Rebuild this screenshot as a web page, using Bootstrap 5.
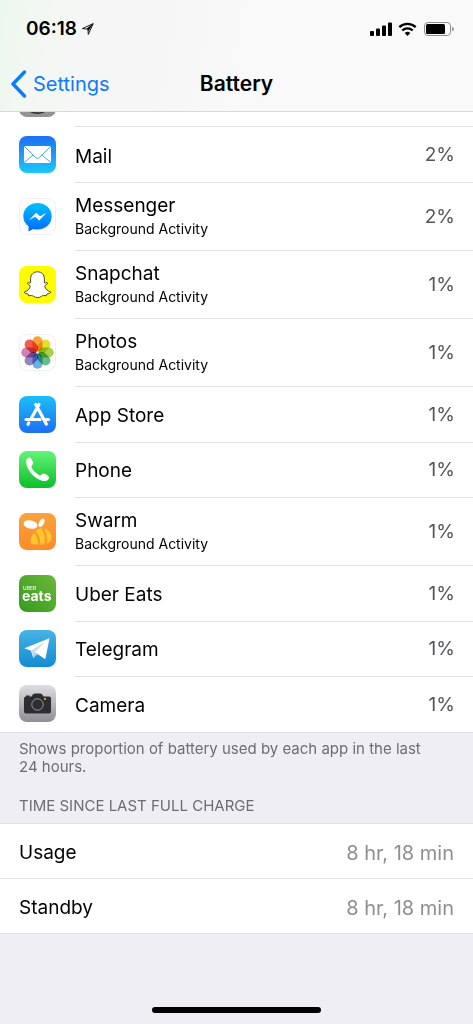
<!DOCTYPE html>
<html lang="en">
<head>
<meta charset="utf-8">
<meta name="viewport" content="width=device-width, initial-scale=1">
<title>Battery</title>
<link rel="stylesheet" href="https://cdn.jsdelivr.net/npm/bootstrap@5.3.0/dist/css/bootstrap.min.css">
<style>
  body { font-family: Inter, "Liberation Sans", sans-serif; font-size: 19px; line-height: 28px; color: #000; background: #efeef4; }
  .top-bar { height: 112px; background: linear-gradient(100deg, #ebf8ec 0, #f3f7f3 9%, #f6f6f6 20%, #f6f6f6 35%, #f9f9f9 55%); border-bottom: 1px solid #d9d9db; }
  .status-line { height: 56px; padding: 2px 18px 0 26px; }
  .clock { font-size: 19px; font-weight: 600; }
  .nav-line { height: 55px; display: grid; grid-template-columns: 1fr auto 1fr; padding: 0 10px; }
  .nav-line h1 { font-size: 21px; line-height: 28px; font-weight: 600; }
  .back-link { color: #0a7aff; font-size: 20px; gap: 6px; }
  .app-list { border-bottom: 1px solid #dddce3; }
  .app-item { height: 56px; padding-left: 19px; gap: 19px; }
  .app-single + .app-single { height: 55px; }
  .app-item.app-tall { height: 68px; }
  .app-item.app-cut { height: 15px; }
  .app-icon { width: 37px; height: 37px; margin-bottom: 2px; }
  .app-cut .app-icon { margin-bottom: 10px; }
  .app-info { border-bottom: 1px solid #e1e1e4; padding-right: 18px; }
  .app-item:last-child .app-info { border-bottom: 0; }
  .app-single .app-names { padding-top: 2px; }
  .app-tall .app-names { padding-bottom: 4px; }
  .app-note { font-size: 14px; line-height: 18px; }
  .petal { mix-blend-mode: multiply; }
  .share { color: #555559; }
  .foot-note { font-size: 15px; line-height: 18px; color: #6d6d72; padding: 7px 36px 0 19px; }
  .group-title { font-size: 15px; line-height: 18px; font-weight: 400; color: #6d6d72; padding: 21px 19px 8px; }
  .time-group { border-top: 1px solid #e1e0e6; border-bottom: 1px solid #e1e0e6; }
  .time-item { height: 54px; padding: 3px 19px 0; }
  .time-item + .time-item { height: 55px; border-top: 1px solid #e3e3e6; }
  .time-item dd { font-size: 20px; color: #8e8e93; }
  .home-bar { width: 169px; height: 6px; border-radius: 3px; background: #000; margin-bottom: 11px; }
</style>
<script src="https://cdn.jsdelivr.net/npm/bootstrap@5.3.0/dist/js/bootstrap.bundle.min.js"></script>
</head>
<body>
<div class="d-flex flex-column min-vh-100">
  <header class="top-bar sticky-top">
    <div class="status-line d-flex justify-content-between align-items-center">
      <div class="d-flex align-items-center gap-1">
        <span class="clock">06:18</span>
        <svg width="14" height="14" viewBox="0 0 14 14" aria-hidden="true"><path d="M1.400 6.600L12.200 1.600L7.300 12.400L6.900 7.200Z" fill="none" stroke="#000" stroke-width=".9"/><path d="M5.500 6.800L12.400 1.300L7.200 9.500L7 7.200Z"/></svg>
      </div>
      <svg width="86" height="16" viewBox="0 0 86 16" aria-label="Signal, Wi-Fi and battery status" role="img">
        <g><rect x="1" y="10" width="4" height="5" rx="1"/><rect x="7" y="7.500" width="4" height="7.500" rx="1"/><rect x="13" y="4.500" width="4" height="10.500" rx="1"/><rect x="19" y="1.500" width="4" height="13.500" rx="1"/></g>
        <g fill="none" stroke="#000" stroke-width="2.400"><path d="M30.300 6.100a12 12 0 0 1 16.400 0"/><path d="M33.300 9.500a7.500 7.500 0 0 1 10.400 0"/></g>
        <path d="M35.700 12a4.200 4.200 0 0 1 5.600 0l-2.800 3z"/>
        <rect x="55.500" y="1.500" width="26" height="13" rx="3.500" fill="none" stroke="#8e8e8e"/>
        <rect x="57" y="3" width="19" height="10" rx="1.500"/>
        <path d="M83 5.500q2 1 2 2.500t-2 2.500z" fill="#999"/>
      </svg>
    </div>
    <nav class="nav-line align-items-center">
      <a href="#" class="back-link d-flex align-items-center text-decoration-none"><svg width="17" height="28" viewBox="0 0 17 28" aria-hidden="true"><path d="M14.500 2L3 14L14.500 26" fill="none" stroke="#0a7aff" stroke-width="3.400" stroke-linecap="round" stroke-linejoin="round"/></svg>Settings</a>
      <h1 class="m-0">Battery</h1>
    </nav>
  </header>

  <ul class="app-list list-unstyled bg-white m-0">
    <li class="app-item app-cut d-flex align-items-end overflow-hidden">
      <svg class="app-icon flex-shrink-0" viewBox="0 0 37 37" aria-hidden="true"><rect width="37" height="37" rx="8" fill="#929297"/><circle cx="18.500" cy="18.500" r="15.500" fill="#333"/><circle cx="18.500" cy="18.500" r="13" fill="none" stroke="#777" stroke-width="2" stroke-dasharray="1.500 1"/></svg>
      <div class="app-info flex-grow-1 align-self-stretch"></div>
    </li>
    <li class="app-item d-flex align-items-center">
      <svg class="app-icon flex-shrink-0" viewBox="0 0 37 37" aria-hidden="true"><defs><linearGradient id="mailBg" x2="0" y2="1"><stop stop-color="#1d6ff2"/><stop offset="1" stop-color="#1bc8fc"/></linearGradient></defs><rect width="37" height="37" rx="8" fill="url(#mailBg)"/><rect x="5" y="10" width="27" height="17" rx="2" fill="#fff"/><path d="M6 11L16.500 21.500Q18.500 23.300 20.500 21.500L31 11M6 26L14 19M31 26L23 19" fill="none" stroke="#3b9cf5" stroke-width=".9"/></svg>
      <div class="app-info d-flex flex-grow-1 align-self-stretch align-items-center justify-content-between"><span class="pt-1">Mail</span><span class="share">2%</span></div>
    </li>
    <li class="app-item app-tall d-flex align-items-center">
      <svg class="app-icon flex-shrink-0" viewBox="0 0 37 37" aria-hidden="true"><defs><linearGradient id="msgBg" x2="0" y2="1"><stop stop-color="#00c1ff"/><stop offset="1" stop-color="#0069ff"/></linearGradient></defs><rect x=".5" y=".5" width="36" height="36" rx="8" fill="#fff" stroke="#f0f0f0"/><path d="M18.500 5C10.400 5 4.300 10.700 4.300 18.200C4.300 22.500 6.300 25.800 9.500 28.300V33.500L14.200 31C15.500 31.400 17 31.500 18.500 31.500C26.600 31.500 32.700 25.600 32.700 18.200S26.600 5 18.500 5Z" fill="url(#msgBg)"/><path d="M9.800 22.300L17.200 14.700L21 18.300L27.600 14.700L20.200 22.500L16.300 18.800Z" fill="#fff"/></svg>
      <div class="app-info d-flex flex-grow-1 align-self-stretch align-items-center justify-content-between"><div class="app-names"><div>Messenger</div><div class="app-note">Background Activity</div></div><span class="share">2%</span></div>
    </li>
    <li class="app-item app-tall d-flex align-items-center">
      <svg class="app-icon flex-shrink-0" viewBox="0 0 37 37" aria-hidden="true"><rect width="37" height="37" rx="8" fill="#fffc00"/><path d="M18.500 5.800C14.300 5.800 11.600 8.700 11.600 12.800V16.800C10.500 17.300 9.300 16.300 8.500 16.900C7.500 17.900 11.300 18.800 11.300 20.200C10.600 23 8.200 25.200 5.300 26.100C5.200 27.500 7.700 27.600 8.900 27.900L9.700 29.800C11.500 29.400 13.200 29.400 14.500 30.200C15.800 31 17 31.700 18.500 31.700S21.200 31 22.500 30.200C23.800 29.400 25.500 29.400 27.300 29.800L28.100 27.900C29.300 27.600 31.800 27.500 31.700 26.100C28.800 25.200 26.400 23 25.700 20.200C25.700 18.800 29.500 17.900 28.500 16.900C27.700 16.300 26.500 17.300 25.400 16.800V12.800C25.400 8.700 22.700 5.800 18.500 5.800Z" fill="#fff" stroke="#333" stroke-width=".9"/></svg>
      <div class="app-info d-flex flex-grow-1 align-self-stretch align-items-center justify-content-between"><div class="app-names"><div>Snapchat</div><div class="app-note">Background Activity</div></div><span class="share">1%</span></div>
    </li>
    <li class="app-item app-tall d-flex align-items-center">
      <svg class="app-icon flex-shrink-0" viewBox="0 0 37 37" aria-hidden="true"><defs><rect id="petal" x="13.500" y="2.300" width="10" height="15.200" rx="5"/></defs><rect x=".5" y=".5" width="36" height="36" rx="8" fill="#fff" stroke="#f0f0f0"/><g><use class="petal" href="#petal" fill="#f9a13a"/><use class="petal" href="#petal" fill="#e8dc2c" transform="rotate(45 18.500 18.500)"/><use class="petal" href="#petal" fill="#a9d14b" transform="rotate(90 18.500 18.500)"/><use class="petal" href="#petal" fill="#62bf8a" transform="rotate(135 18.500 18.500)"/><use class="petal" href="#petal" fill="#6aaee6" transform="rotate(180 18.500 18.500)"/><use class="petal" href="#petal" fill="#8f86c6" transform="rotate(225 18.500 18.500)"/><use class="petal" href="#petal" fill="#cf83b5" transform="rotate(270 18.500 18.500)"/><use class="petal" href="#petal" fill="#f25b4d" transform="rotate(315 18.500 18.500)"/></g></svg>
      <div class="app-info d-flex flex-grow-1 align-self-stretch align-items-center justify-content-between"><div class="app-names"><div>Photos</div><div class="app-note">Background Activity</div></div><span class="share">1%</span></div>
    </li>
    <li class="app-item app-single d-flex align-items-center">
      <svg class="app-icon flex-shrink-0" viewBox="0 0 37 37" aria-hidden="true"><defs><linearGradient id="storeBg" x2="0" y2="1"><stop stop-color="#1bbffb"/><stop offset="1" stop-color="#1d6ff2"/></linearGradient></defs><rect width="37" height="37" rx="8" fill="url(#storeBg)"/><g stroke="#fff" stroke-width="3.200" stroke-linecap="round" fill="none"><path d="M20 8.500L12.500 22M7 23.500H21M16.800 8.500L27.300 28M26.500 23.500H29.500M9.700 27L9 28.300"/></g></svg>
      <div class="app-info d-flex flex-grow-1 align-self-stretch align-items-center justify-content-between"><span class="app-names">App Store</span><span class="share">1%</span></div>
    </li>
    <li class="app-item app-single d-flex align-items-center">
      <svg class="app-icon flex-shrink-0" viewBox="0 0 37 37" aria-hidden="true"><defs><linearGradient id="phoneBg" x2="0" y2="1"><stop stop-color="#63f478"/><stop offset="1" stop-color="#0dbe2a"/></linearGradient></defs><rect width="37" height="37" rx="8" fill="url(#phoneBg)"/><path d="M7.200 9.200C8 7.400 9.700 6.200 11.100 6.700C12.300 7.300 14 10.600 14.200 11.900C14.400 13.500 12.200 14.300 12.400 15.800C13.200 18.700 17.600 23.100 20.400 24.200C22.200 24.800 23 22.600 24.600 22.600C26.200 22.700 29.500 24.800 30 26.100C30.500 27.600 28.900 29.400 27 29.900C17.800 31 6.200 18.600 7.200 9.200Z" fill="#fff"/></svg>
      <div class="app-info d-flex flex-grow-1 align-self-stretch align-items-center justify-content-between"><span class="app-names">Phone</span><span class="share">1%</span></div>
    </li>
    <li class="app-item app-tall d-flex align-items-center">
      <svg class="app-icon flex-shrink-0" viewBox="0 0 37 37" aria-hidden="true"><defs><linearGradient id="swarmBg" x2="0" y2="1"><stop stop-color="#fba33c"/><stop offset="1" stop-color="#fa8a2a"/></linearGradient><clipPath id="bee"><path d="M12 31C10.500 25 15 17 21 15.500C27 14.500 32.500 19 32.500 24.500C32.500 31 25 32.500 12 31Z"/></clipPath></defs><rect width="37" height="37" rx="8" fill="url(#swarmBg)"/><ellipse cx="11.500" cy="11.500" rx="7" ry="4.200" transform="rotate(12 11.500 11.500)" fill="#fff"/><ellipse cx="22.500" cy="9.800" rx="2.400" ry="4.500" transform="rotate(28 22.500 9.800)" fill="#fff"/><g clip-path="url(#bee)"><rect x="9" y="13" width="25" height="20" fill="#fdc62d"/><path d="M15 18Q21 24 20 33M22 13Q29 22 26 33" stroke="#fb9431" stroke-width="2.200" fill="none"/></g></svg>
      <div class="app-info d-flex flex-grow-1 align-self-stretch align-items-center justify-content-between"><div class="app-names"><div>Swarm</div><div class="app-note">Background Activity</div></div><span class="share">1%</span></div>
    </li>
    <li class="app-item app-single d-flex align-items-center">
      <svg class="app-icon flex-shrink-0" viewBox="0 0 37 37" aria-hidden="true"><defs><linearGradient id="eatsBg" x1="1" x2="0" y2="1"><stop stop-color="#6cb83b"/><stop offset="1" stop-color="#359a1d"/></linearGradient></defs><rect width="37" height="37" rx="8" fill="url(#eatsBg)"/><text x="4" y="15" font-size="5" font-weight="600" fill="#e3f3dc">UBER</text><text x="3" y="26" font-size="14" font-weight="700" fill="#fff">eats</text></svg>
      <div class="app-info d-flex flex-grow-1 align-self-stretch align-items-center justify-content-between"><span class="app-names">Uber Eats</span><span class="share">1%</span></div>
    </li>
    <li class="app-item app-single d-flex align-items-center">
      <svg class="app-icon flex-shrink-0" viewBox="0 0 37 37" aria-hidden="true"><defs><linearGradient id="teleBg" x2="0" y2="1"><stop stop-color="#48b3e5"/><stop offset="1" stop-color="#148bd3"/></linearGradient></defs><rect width="37" height="37" rx="8" fill="url(#teleBg)"/><path d="M5.300 18.200L30.500 8.300L26.300 29.300L18.500 24L14.300 27.800L12 20.800Z" fill="#fff"/><path d="M12 20.800L26.500 11.500L15.700 22.300L14.300 27.800Z" fill="#c5dcf0"/><path d="M15.700 22.300L18.500 24L14.300 27.800Z" fill="#a4c7e6"/></svg>
      <div class="app-info d-flex flex-grow-1 align-self-stretch align-items-center justify-content-between"><span class="app-names">Telegram</span><span class="share">1%</span></div>
    </li>
    <li class="app-item app-single d-flex align-items-center">
      <svg class="app-icon flex-shrink-0" viewBox="0 0 37 37" aria-hidden="true"><defs><linearGradient id="camBg" x2="0" y2="1"><stop stop-color="#dedde2"/><stop offset="1" stop-color="#8f8e94"/></linearGradient></defs><rect width="37" height="37" rx="8" fill="url(#camBg)"/><path d="M7 10.500H10.500V11.500H12.500Q14 8.500 15.500 8.500H21.500Q23 8.500 24.500 11.500H30Q32 11.500 32 13.500V26.500Q32 28.500 30 28.500H7Q5 28.500 5 26.500V13.500Q5 11.500 7 11.500Z" fill="#2d2e31"/><circle cx="18.500" cy="19.500" r="5.700" fill="none" stroke="#a5a5a8" stroke-width=".9"/><circle cx="26" cy="14" r="1" fill="#ffcb05"/></svg>
      <div class="app-info d-flex flex-grow-1 align-self-stretch align-items-center justify-content-between"><span class="app-names">Camera</span><span class="share">1%</span></div>
    </li>
  </ul>

  <p class="foot-note m-0">Shows proportion of battery used by each app in the last 24 hours.</p>
  <h2 class="group-title m-0 text-uppercase">Time since last full charge</h2>
  <dl class="time-group bg-white m-0">
    <div class="time-item d-flex align-items-center justify-content-between"><dt class="fw-normal">Usage</dt><dd class="m-0">8 hr, 18 min</dd></div>
    <div class="time-item d-flex align-items-center justify-content-between"><dt class="fw-normal">Standby</dt><dd class="m-0">8 hr, 18 min</dd></div>
  </dl>
  <div class="home-bar mx-auto mt-auto"></div>
</div>
</body>
</html>
